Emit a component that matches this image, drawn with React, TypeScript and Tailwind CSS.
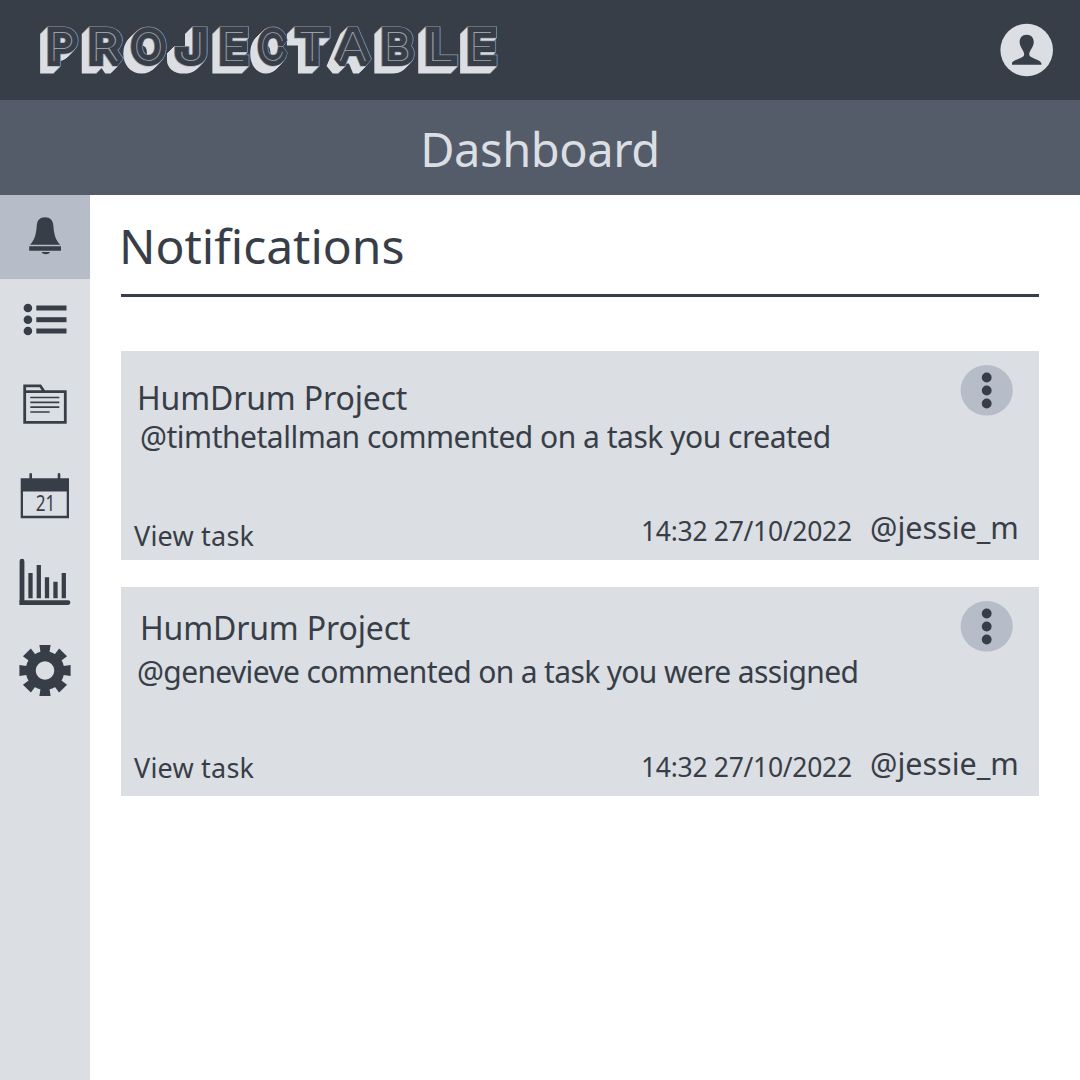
import React from "react";

const LOGO = [
  { ch: "P", l: 46.7, r: 77.5 },
  { ch: "R", l: 88.5, r: 122 },
  { ch: "O", l: 131.5, r: 166 },
  { ch: "J", l: 175.5, r: 207.5 },
  { ch: "E", l: 219, r: 248.5 },
  { ch: "C", l: 258, r: 287.5 },
  { ch: "T", l: 296, r: 329 },
  { ch: "A", l: 336.5, r: 369.5 },
  { ch: "B", l: 381, r: 414 },
  { ch: "L", l: 425, r: 456.5 },
  { ch: "E", l: 466.7, r: 496.5 },
];

function Logo() {
  return (
    <svg width="510" height="100" viewBox="0 0 510 100" className="block font-['Inter'] text-[39px] font-thin" role="img" aria-label="Projectable">
      <defs>
        <g id="wordmark">
          {LOGO.map((g, i) => (
            <text
              key={i}
              x={g.l + 1.8}
              y={60.9}
              textLength={g.r - g.l - 4}
              lengthAdjust="spacingAndGlyphs"
            >
              {g.ch}
            </text>
          ))}
        </g>
      </defs>
      <g className="[filter:drop-shadow(-1px_1px_0_#dbdee3)_drop-shadow(-2px_2px_0_#dbdee3)_drop-shadow(-4px_4px_0_#dbdee3)]">
        <use href="#wordmark" fill="none" stroke="#9a9fa9" strokeWidth="11.2" strokeLinejoin="miter" strokeMiterlimit="1.5" />
      </g>
      <use href="#wordmark" fill="#383e48" stroke="#383e48" strokeWidth="9.8" strokeLinejoin="miter" strokeMiterlimit="1.5" />
      <use href="#wordmark" fill="#9a9fa9" />
    </svg>
  );
}

function Avatar() {
  return (
    <svg width="54" height="54" viewBox="0 0 54 54" className="block">
      <circle cx="26.7" cy="27" r="26.3" fill="#dbdee3" />
      <path d="M26.7 11.8C21.7 11.8 19.3 15.4 19.7 20.1C20 24.5 24.2 27.8 24.2 31.4C24.2 35.4 12 36.6 12 40.4V41.8H41.4V40.4C41.4 36.6 29.2 35.4 29.2 31.4C29.2 27.8 33.4 24.5 33.7 20.1C34.1 15.4 31.7 11.8 26.7 11.8Z" fill="#383e48" />
    </svg>
  );
}

function Bell() {
  return (
    <svg width="90" height="84" viewBox="0 195 90 84" fill="#383e48">
      <path d="M45 217.2C39.8 217.2 37.2 220.5 36.8 225C36.2 234.5 34.5 240 30 244.7H60.3C55.6 240 54 234.5 53.3 225C52.9 220.5 50.2 217.2 45 217.2Z" />
      <path d="M29.2 246.2H61V250.7H29.2ZM41.5 252H50C48.6 255 43.2 255 41.5 252Z" />
    </svg>
  );
}

function List() {
  return (
    <svg width="90" height="84" viewBox="0 279 90 84" fill="#383e48">
      {[308, 319.7, 331].map((y) => (
        <g key={y}>
          <circle cx="27.9" cy={y} r="4.3" />
          <rect x="36.3" y={y - 2.5} width="30.2" height="5" />
        </g>
      ))}
    </svg>
  );
}

function Folder() {
  return (
    <svg width="90" height="92" viewBox="0 363 90 92" fill="none" stroke="#383e48">
      <path d="M24.7 391.7H65.3V422.3H24.7V385.8H40.3L44.3 391.7" strokeWidth="2.8" />
      <path d="M30.3 397.5H59.3M30.3 402.4H59.3M30.3 407.2H59.3M30.3 412H49.7" strokeWidth="1.7" />
    </svg>
  );
}

function Calendar() {
  return (
    <svg width="90" height="84" viewBox="0 455 90 84">
      <path d="M20.7 478.3H69V518.2H20.7Z" fill="#383e48" />
      <path d="M23 491.5H66.7V515.7H23Z" fill="#dbdee3" />
      <path d="M30.7 474.3V480M59 474.3V480" stroke="#383e48" strokeWidth="2.6" strokeLinecap="round" />
      <text x="35.7" y="511" textLength="19.5" lengthAdjust="spacingAndGlyphs" fill="#383e48" className="font-['Noto_Sans'] text-[21px]">21</text>
    </svg>
  );
}

function Chart() {
  return (
    <svg width="90" height="84" viewBox="0 539 90 84" fill="none" stroke="#383e48">
      <path d="M22 561.2V602.6H68" strokeWidth="4.8" strokeLinecap="round" />
      <path d="M19.6 600H22V605H19.6Z" fill="#383e48" stroke="none" />
      <path d="M30.5 598.3V573M38.8 598.3V565M47 598.3V577.3M55.5 598.3V581.7M63.8 598.3V573" strokeWidth="4.3" />
    </svg>
  );
}

function Gear() {
  return (
    <svg width="90" height="92" viewBox="-45 -47.5 90 92" fill="#383e48">
      {[0, 45, 90, 135, 180, 225, 270, 315].map((a) => (
        <path key={a} transform={`rotate(${a})`} d="M-4 -15L-5.6 -25.6H5.6L4 -15Z" />
      ))}
      <circle r="14.3" fill="none" stroke="#383e48" strokeWidth="10" />
    </svg>
  );
}

function MoreButton() {
  return (
    <button className="block h-[51px] w-[53px]" aria-label="More options">
      <svg width="53" height="51" viewBox="0 0 53 51" fill="#383e48">
        <ellipse cx="26.7" cy="25.3" rx="26.1" ry="25.3" fill="#b6bdc8" />
        <circle cx="26.7" cy="12.5" r="4.9" />
        <circle cx="26.7" cy="25.5" r="4.9" />
        <circle cx="26.7" cy="38.5" r="4.9" />
      </svg>
    </button>
  );
}

type CardProps = {
  message: string;
  titleClass: string;
  messageClass: string;
  viewClass: string;
};

function Card({ message, titleClass, messageClass, viewClass }: CardProps) {
  return (
    <article className="flex h-[209px] flex-col bg-[#dbdee3]">
      <div className="flex h-[131px] justify-between pr-[26px]">
        <div className="whitespace-nowrap">
          <h2 className={titleClass}>HumDrum Project</h2>
          <p className={messageClass}>{message}</p>
        </div>
        <div className="-ml-40 pt-[14px]">
          <MoreButton />
        </div>
      </div>
      <div className="flex pt-[25px] pl-[13px] whitespace-nowrap">
        <a className={viewClass}>View task</a>
        <span className="mt-[4px] w-[229px] text-[26.5px] leading-[40px] tracking-[-0.3px]">14:32 27/10/2022</span>
        <span className="text-[30.5px] leading-[41px]">@jessie_m</span>
      </div>
    </article>
  );
}

export default function App() {
  return (
    <div className="flex h-[1080px] w-[1080px] flex-col overflow-hidden bg-white font-['Noto_Sans',sans-serif] text-[#383e48]">
      <header className="flex h-[100px] items-center justify-between bg-[#383e48] pr-[26px]">
        <Logo />
        <Avatar />
      </header>
      <div className="h-[95px] bg-[#545c6a] text-center text-[47px] leading-[98px] tracking-[-0.4px] text-[#dbdee3]">Dashboard</div>
      <div className="flex flex-1">
        <nav className="flex w-[90px] flex-col bg-[#dbdee3]">
          <div className="h-[84px] bg-[#b6bdc8]"><Bell /></div>
          <List />
          <Folder />
          <Calendar />
          <Chart />
          <Gear />
        </nav>
        <main className="flex-1 pr-[41px] pl-[31px]">
          <h1 className="-ml-[2px] h-[99px] text-[48px] leading-[102px]">Notifications</h1>
          <div className="h-[3px] bg-[#383e48]" />
          <section className="flex flex-col gap-[27px] pt-[54px]">
            <Card
              message="@timthetallman commented on a task you created"
              titleClass="pt-[27px] pl-[16px] text-[32px] leading-[40px] tracking-[-0.15px]"
              messageClass="-mt-px pl-[19px] text-[30px] leading-[40px] tracking-[-0.49px]"
              viewClass="mt-[9px] w-[507px] text-[27px] leading-[40px] tracking-[0.2px]"
            />
            <Card
              message="@genevieve commented on a task you were assigned"
              titleClass="pt-[21px] pl-[19px] text-[32px] leading-[40px] tracking-[-0.15px]"
              messageClass="mt-[4px] pl-[16px] text-[30px] leading-[40px] tracking-[-0.64px]"
              viewClass="mt-[5px] w-[507px] text-[27px] leading-[40px] tracking-[0.2px]"
            />
          </section>
        </main>
      </div>
    </div>
  );
}
